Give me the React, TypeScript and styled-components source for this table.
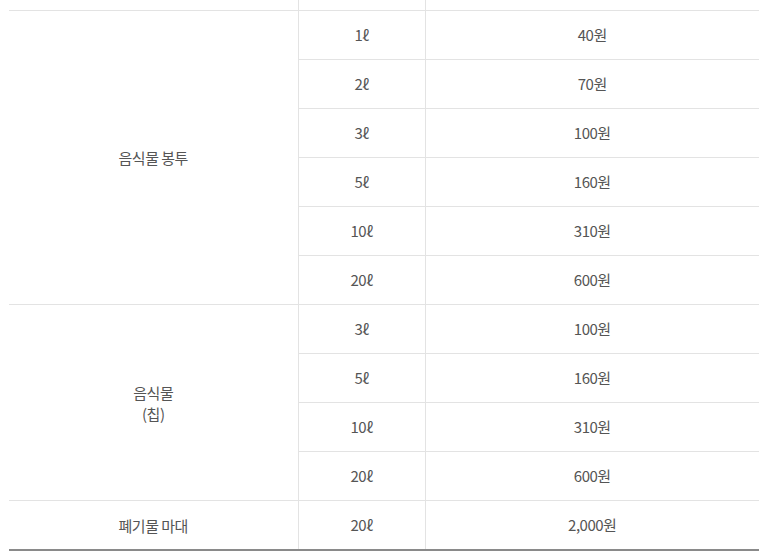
import React from "react";
import styled, { createGlobalStyle } from "styled-components";

const GlobalStyle = createGlobalStyle`
    html, body {
        margin: 0;
        padding: 0;
        background: #fff;
    }
    body {
        font-family: "Noto Sans CJK KR", "Noto Sans", sans-serif;
    }
`;

type Row = { name?: string; span?: number; size: string; price: string };

const rows: Row[] = [
    { name: "음식물 봉투", span: 6, size: "1ℓ", price: "40원" },
    { size: "2ℓ", price: "70원" },
    { size: "3ℓ", price: "100원" },
    { size: "5ℓ", price: "160원" },
    { size: "10ℓ", price: "310원" },
    { size: "20ℓ", price: "600원" },
    { name: "음식물\n(칩)", span: 4, size: "3ℓ", price: "100원" },
    { size: "5ℓ", price: "160원" },
    { size: "10ℓ", price: "310원" },
    { size: "20ℓ", price: "600원" },
    { name: "폐기물 마대", span: 1, size: "20ℓ", price: "2,000원" },
];

export default function App() {
    return (
        <Page>
            <GlobalStyle />
            <PriceTable>
                <colgroup>
                    <col style={{ width: 289 }} />
                    <col style={{ width: 127 }} />
                    <col />
                </colgroup>
                <tbody>
                    <CutRow>
                        <NameCell />
                        <Cell />
                        <Cell />
                    </CutRow>
                    {rows.map((r, i) => (
                        <tr key={i}>
                            {r.name && (
                                <NameCell rowSpan={r.span}>{r.name}</NameCell>
                            )}
                            <Cell>{r.size}</Cell>
                            <Cell>{r.price}</Cell>
                        </tr>
                    ))}
                </tbody>
            </PriceTable>
        </Page>
    );
}

const Page = styled.div`
    padding: 0 10px 0 9px;
    width: 750px;
`;

const PriceTable = styled.table`
    width: 750px;
    border-collapse: collapse;
    table-layout: fixed;
    border-bottom: 2px solid #8a8a8a;
`;

const Cell = styled.td`
    height: 48px;
    padding: 0;
    border-top: 1px solid #e3e3e3;
    border-left: 1px solid #e3e3e3;
    text-align: center;
    color: #555;
    font-size: 15px;
    letter-spacing: -0.5px;
    line-height: 20px;
`;

const NameCell = styled(Cell)`
    white-space: pre-line;
    line-height: 21px;
    border-left: none;
`;

const CutRow = styled.tr`
    td {
        height: 10px;
        border-top: none;
    }
`;
